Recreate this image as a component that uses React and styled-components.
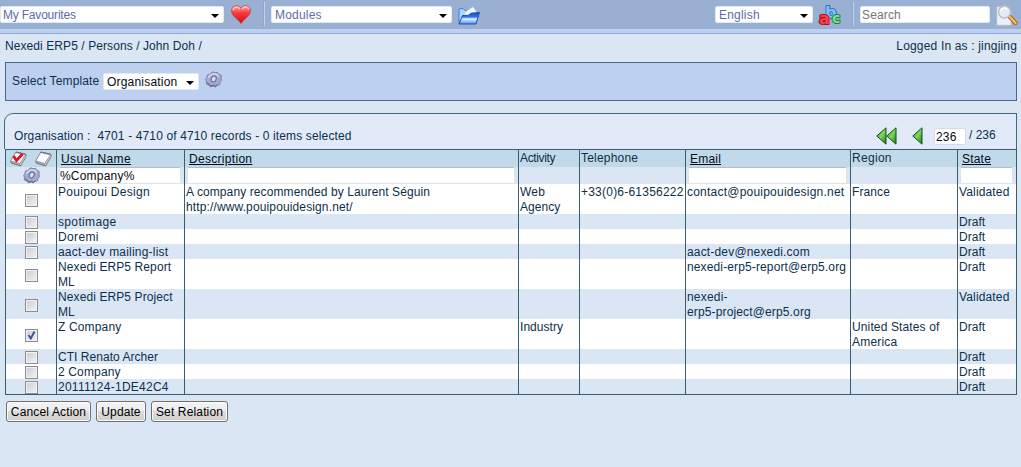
import React from "react";
import styled, { createGlobalStyle } from "styled-components";

const Global = createGlobalStyle`
  * { box-sizing: border-box; }
  body { margin: 0; background: #dbe6f5; font: 12px/15px "Liberation Sans", Arial, sans-serif; letter-spacing: .2px; color: #0d2f4b; }
  input { font: inherit; letter-spacing: inherit; }
`;
const Page = styled.div`width: 1021px; height: 467px; overflow: hidden; background: #dbe6f5;`;
const Toolbar = styled.header`
  height: 34px; display: flex; align-items: flex-start; padding-top: 6px;
  background: linear-gradient(#9ab0d3 0 29px, #bdd0f0 29px 33px, #8fa9da 33px);
`;
const Select = styled.div`
  width: ${p => p.$w}px; height: 17px; margin-left: ${p => p.$ml || 0}px;
  padding: 1px 4px 0 ${p => p.$pl || 3}px; display: flex; align-items: center; justify-content: space-between;
  background: #fff; color: ${p => p.$dark ? "#0a0a14" : "#5c6dab"}; border: 1px solid #e3e9f4; border-radius: 2px;
  letter-spacing: ${p => p.$ls ?? .2}px; white-space: nowrap; flex: none;
`;
const Arrow = styled.span`border: 4px solid transparent; border-top-color: #000; border-bottom: 0; margin-top: 1px;`;
const Icon = styled.svg`
  display: block; flex: none; width: ${p => p.$w}px; height: ${p => p.$h}px;
  margin: ${p => p.$m || "0"}; overflow: visible;
`;
const Separator = styled.div`width: 2px; height: 24px; margin: -4px 0 0 ${p => p.$ml}px; background: linear-gradient(90deg, #8ba5ce 50%, #b9d5ec 50%);`;
const SearchInput = styled.input`
  width: 130px; height: 17px; margin-left: 6px; padding: 1px 1px 0; border: 1px solid #e3e9f4; border-radius: 2px;
  background: #fff; letter-spacing: .15px;
  &::placeholder { color: #757575; opacity: 1; }
`;
const Crumbs = styled.div`
  height: 28px; padding: 5px 4px 0 5px; display: flex; justify-content: space-between; letter-spacing: .08px;
`;
const User = styled.span`letter-spacing: .17px;`;
const Template = styled.section`
  width: 1012px; height: 39px; margin-left: 5px; border: 1px solid #47688c; background: #bdd0f0;
  padding: 10px 0 0 6px; display: flex; align-items: flex-start;
`;
const TemplateLabel = styled.span`width: 91px; padding-top: 1px; white-space: nowrap; letter-spacing: .15px;`;
const ListHead = styled.div`
  width: 1013px; height: 36px; margin: 12px 0 0 4px; border: 1px solid #3f6b80; border-bottom: 0;
  border-radius: 9px 0 0 0; background: #e2eaf9; display: flex; padding: 0 20px 0 9px;
`;
const Records = styled.div`padding-top: 15px; white-space: pre; flex: 1; letter-spacing: .13px;`;
const PageInput = styled.input`
  width: 32px; height: 17px; margin: 14px 0 0 11px; padding: 0 1px; border: 1px solid #d5dbe8; border-radius: 2px;
  background: #fff; color: #0a0a14;
`;
const PageTotal = styled.span`padding: 14px 0 0 3px; width: 30px; white-space: nowrap; letter-spacing: 0;`;
const Table = styled.div`width: 1012px; margin-left: 5px; border: 1px solid #355f70; border-right: 0;`;
const Row = styled.div`
  display: grid; grid-template-columns: 51px 128px 334px 61px 106px 165px 107px 59px;
  height: ${p => p.$h}px; background: ${p => p.$bg};
`;
const Cell = styled.div`
  border-right: 1px solid #355f70; padding: 1px 0 0 1px; white-space: pre; letter-spacing: ${p => p.$ls ?? .2}px;
  min-height: 0;
`;
const Line = styled.div`height: 15px; letter-spacing: ${p => p.$ls}px;`;
const HeadCell = styled(Cell)`
  padding: ${p => p.$link ? "2px 0 0 4px" : "1px 0 0 1px"};
  color: ${p => p.$link ? "#020c20" : "#0d2f4b"};
  text-decoration: ${p => p.$link ? "underline" : "none"};
`;
const FilterCell = styled(Cell)`padding-top: 0;`;
const IconCell = styled(Cell)`display: flex; justify-content: center; padding: 0;`;
const CheckCell = styled(Cell)`display: flex; justify-content: center; align-items: center; padding: 2px 0 0 1px;`;
const Filter = styled.input`
  display: block; width: ${p => p.$w}px; height: 17px; margin-left: 1px; padding: 0; border: 1px solid #dde3ea;
  border-top-color: #b5bcc4; border-radius: 2px; background: #fff; color: #0a0a14; letter-spacing: .2px;
`;
const Check = styled.span`
  width: 13px; height: 13px; border: 1px solid #8a8c90; flex: none;
  background: linear-gradient(135deg, #c8cbd0, #f4f4f4); box-shadow: inset 0 0 0 1px #f2f2f2;
`;
const Actions = styled.div`display: flex; gap: 5px; padding: 6px 0 0 6px;`;
const Button = styled.button`
  width: ${p => p.$w}px; height: 21px; padding: 1px 0 0; border: 1px solid #707070; border-radius: 3px;
  background: linear-gradient(#f3f3f3, #ebebeb 50%, #dddddd 50%, #cfcfcf); box-shadow: inset 0 0 0 1px #fafafa;
  font: inherit; letter-spacing: ${p => p.$ls}px; color: #000; white-space: nowrap;
`;

const Heart = () => (
  <Icon $w={20} $h={19} $m="-1px 0 0 7px" viewBox="0 0 20 18" preserveAspectRatio="none">
    <defs><linearGradient id="heart" x2="0" y2="1"><stop stopColor="#ffaaaa" /><stop offset=".4" stopColor="#fb3a3a" /><stop offset="1" stopColor="#d20d16" /></linearGradient></defs>
    <path d="M10 3.2C8-.6.6-.5.6 5.700c0 4.800 6.900 8 9.400 11.800 2.500-3.800 9.400-7 9.400-11.800C19.400-.5 12-.6 10 3.200Z" fill="url(#heart)" stroke="#c2343f" strokeWidth=".7" />
    <path d="M2 5C2.500 1.500 7 1 9 4M11 4c2-3 6-2.500 7 0" stroke="#ffc4c2" strokeWidth="1.300" fill="none" />
  </Icon>
);
const Folder = () => (
  <Icon $w={22} $h={19} $m="0 0 0 6px" viewBox="0 0 22 19">
    <defs><linearGradient id="folder" x2="0" y2="1"><stop stopColor="#174bc0" /><stop offset=".4" stopColor="#3478e6" /><stop offset=".55" stopColor="#e4f3ff" /><stop offset="1" stopColor="#4a8cec" /></linearGradient></defs>
    <path d="M1 18V3l4-.5 2 2 11 2v7Z" fill="#a9dafc" stroke="#3a7be0" />
    <path d="M5.500 9 8 5.500 15 .7l4 6-3 6H5Z" fill="#f5f8ff" stroke="#b8c8e4" strokeWidth=".6" />
    <path d="M1 18 4.500 9.500l6-.3 2.500-2 8.500-.7L18 18Z" fill="url(#folder)" stroke="#1c4fc4" />
  </Icon>
);
const LetterText = styled.text`font: bold ${p => p.$s}px "DejaVu Sans", sans-serif; letter-spacing: 0; paint-order: stroke; stroke-width: 2px; stroke-linejoin: round;`;
const Letters = () => (
  <Icon $w={23} $h={22} $m="-2px 0 0 6px" viewBox="0 0 23 22">
    <LetterText $s={16} x="6" y="14" fill="#7cc3fa" stroke="#2d70cb">b</LetterText>
    <LetterText $s={16} x="0" y="20" fill="#f04848" stroke="#b50b25">a</LetterText>
    <LetterText $s={14} x="13" y="19" fill="#7ade92" stroke="#16863c">c</LetterText>
  </Icon>
);
const Magnifier = () => (
  <Icon $w={22} $h={22} $m="-2px 0 0 6px" viewBox="0 0 22 22">
    <path d="M1 3h10l4 4v14H1Z" fill="#edf1f5" stroke="#cbd3dc" strokeWidth=".7" />
    <path d="M14 13l5.500 6" stroke="#a86b20" strokeWidth="4.400" strokeLinecap="round" />
    <path d="M14 13l5.500 6" stroke="#f6bd55" strokeWidth="2.500" strokeLinecap="round" />
    <circle cx="8.500" cy="8" r="6" fill="#e4eaf0" fillOpacity=".85" stroke="#b4bec8" strokeWidth="1.400" />
    <path d="M4.800 7.500a4 4 0 0 1 6.500-2.500" stroke="#fff" strokeWidth="1.500" fill="none" />
  </Icon>
);
const Gear = ({ m }) => (
  <Icon $w={17} $h={17} $m={m} viewBox="0 0 17 17">
    <path d="M6 2 8 .8l2 1 2.500-.5L14 3.500l2.200.7-.2 3 .5 2.300-1.500 1.700-.3 2.500-2.500.5L10.500 16 8 15l-2.500 1-1.700-2L1.300 13 1.500 10.500.5 8.500 2 6.500 2.300 4 4.700 3.600Z" fill="#a6a9cf" stroke="#777ba7" strokeWidth=".9" />
    <path d="M2 11.500 4 13l1.500 2 3-.8 2.200 1.200 1.500-1.700" stroke="#5d5f85" fill="none" />
    <path d="M3.500 7Q5 3.200 9 3t4.500 3" stroke="#d8d9ee" strokeWidth="1.500" fill="none" />
    <ellipse cx="8.700" cy="8" rx="2.400" ry="3.100" transform="rotate(25 8.700 8)" fill="#d4dff1" stroke="#65688f" />
  </Icon>
);
const Sheets = ({ checked, m }) => (
  <Icon $w={17} $h={16} $m={m} viewBox="0 0 17 16">
    <path d="M6 1 16 3.300v2.500L10.500 15 1 12V9.500Z" fill="#a3a5ad" stroke="#62646c" strokeWidth=".8" />
    <path d="M5.800 1.500 15.500 3.500 9.800 12.500.8 9.800Z" fill="#fafaff" stroke="#8c8f98" strokeWidth=".7" />
    <path d="m10.300 14 5.300-9" stroke="#dedfe4" fill="none" strokeWidth=".7" />
    <path d="M5.800 1.200l9.700 2.200" stroke="#555963" strokeWidth="1.400" strokeDasharray="1 1" />
    {checked && <path d="m3.500 5 3 4.500L12.500 3" stroke="#e11220" strokeWidth="2.700" fill="none" />}
  </Icon>
);
const Prev = ({ double: isDouble, m }) => (
  <Icon $w={isDouble ? 21 : 11} $h={18} $m={m} viewBox={isDouble ? "0 0 21 18" : "0 0 11 18"}>
    <defs><linearGradient id="green" x2="1" y2="1"><stop stopColor="#2f8b2c" /><stop offset=".5" stopColor="#82d65c" /><stop offset="1" stopColor="#16751b" /></linearGradient></defs>
    <path d="M10 .8v16.400L.8 9Z" fill="url(#green)" stroke="#0c5412" />
    {isDouble && <path d="M20 .8v16.400L10.800 9Z" fill="url(#green)" stroke="#0c5412" />}
  </Icon>
);
const Tick = () => (
  <Icon $w={11} $h={11} viewBox="0 0 11 11"><path d="m2.500 5 2.300 3.500L8.500 1.500" fill="none" stroke="#3d4f9f" strokeWidth="1.900" /></Icon>
);

const columns = [["Usual Name", 122, .4], ["Description", 328, .3], ["Activity", 0, -.35], ["Telephone", 0, .2], ["Email", 159, .2], ["Region", 0, .3], ["State", 53, .2]];

// Each cell is a list of [text, letter spacing] lines.
const draft = [["Draft", .05]];
const rows = [
  { h: 30, c: [[["Pouipoui Design", .3]], [["A company recommended by Laurent Séguin", .1], ["http://www.pouipouidesign.net/", .13]], [["Web", .2], ["Agency", .05]], [["+33(0)6-61356222", .22]], [["contact@pouipouidesign.net", .22]], [["France", .1]], [["Validated", .15]]] },
  { h: 15, c: [[["spotimage", .35]], [], [], [], [], [], draft] },
  { h: 15, c: [[["Doremi", .35]], [], [], [], [], [], draft] },
  { h: 15, c: [[["aact-dev mailing-list", .2]], [], [], [], [["aact-dev@nexedi.com", .17]], [], draft] },
  { h: 30, c: [[["Nexedi ERP5 Report", .1], ["ML", 0]], [], [], [], [["nexedi-erp5-report@erp5.org", .13]], [], draft] },
  { h: 30, c: [[["Nexedi ERP5 Project", .1], ["ML", 0]], [], [], [], [["nexedi-", .2], ["erp5-project@erp5.org", .14]], [], [["Validated", .15]]] },
  { h: 30, on: true, c: [[["Z Company", .15]], [], [["Industry", .05]], [], [], [["United States of", .13], ["America", .2]], draft] },
  { h: 15, c: [[["CTI Renato Archer", .04]], [], [], [], [], [], draft] },
  { h: 15, c: [[["2 Company", .15]], [], [], [], [], [], draft] },
  { h: 15, c: [[["20111124-1DE42C4", .25]], [], [], [], [], [], draft] },
];

export default function App() {
  return (
    <Page>
      <Global />
      <Toolbar>
        <Select $w={224} $pl={2} $ls={-.2}>My Favourites<Arrow /></Select>
        <Heart />
        <Separator $ml={12} />
        <Select $w={181} $ml={6} $ls={.2}>Modules<Arrow /></Select>
        <Folder />
        <Select $w={98} $ml={235} $ls={.2}>English<Arrow /></Select>
        <Letters />
        <Separator $ml={10} />
        <SearchInput placeholder="Search" />
        <Magnifier />
      </Toolbar>
      <Crumbs><span>Nexedi ERP5 / Persons / John Doh /</span><User>Logged In as : jingjing</User></Crumbs>
      <Template>
        <TemplateLabel>Select Template</TemplateLabel>
        <Select $w={96} $pl={3} $dark>Organisation<Arrow /></Select>
        <Gear m="-2px 0 0 6px" />
      </Template>
      <ListHead>
        <Records>{"Organisation :  4701 - 4710 of 4710 records - 0 items selected"}</Records>
        <Prev double m="13px 0 0 0" />
        <Prev m="13px 0 0 15px" />
        <PageInput defaultValue="236" />
        <PageTotal>/ 236</PageTotal>
      </ListHead>
      <Table>
        <Row $h={17} $bg="#c0daea">
          <IconCell><Sheets checked m="1px 8px 0 0" /><Sheets m="1px 0 0 0" /></IconCell>
          {columns.map(([name, width, ls]) => <HeadCell key={name} $link={!!width} $ls={ls}>{name}</HeadCell>)}
        </Row>
        <Row $h={17} $bg="#dbe6f5">
          <IconCell><Gear m="0" /></IconCell>
          {columns.map(([name, width]) => (
            <FilterCell key={name}>{width > 0 && <Filter $w={width} defaultValue={name === "Usual Name" ? "%Company%" : ""} />}</FilterCell>
          ))}
        </Row>
        {rows.map((row, i) => (
          <Row key={i} $h={row.h} $bg={i % 2 ? "#dbe6f5" : "#fff"}>
            <CheckCell><Check>{row.on && <Tick />}</Check></CheckCell>
            {row.c.map((lines, j) => (
              <Cell key={j}>{lines.map(([text, ls]) => <Line key={text} $ls={ls}>{text}</Line>)}</Cell>
            ))}
          </Row>
        ))}
      </Table>
      <Actions>
        <Button $w={85} $ls={.15}>Cancel Action</Button>
        <Button $w={50} $ls={.1}>Update</Button>
        <Button $w={77} $ls={.15}>Set Relation</Button>
      </Actions>
    </Page>
  );
}
